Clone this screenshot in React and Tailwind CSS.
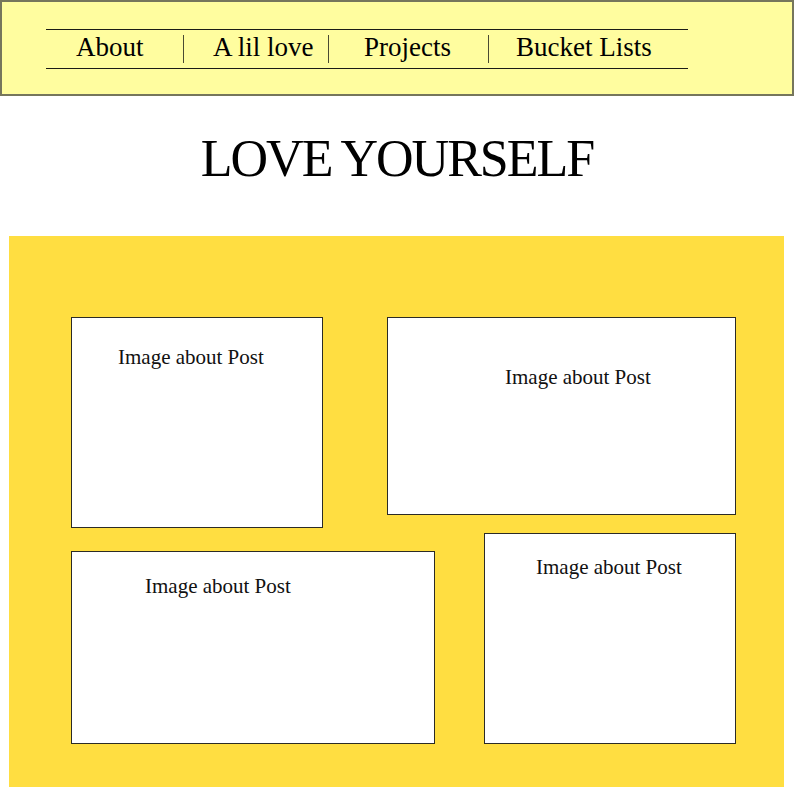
import React from 'react';

const NAV = [
  { label: 'About', cls: 'w-[137px] pl-[30px]' },
  { label: 'A lil love', cls: 'w-[144px] pl-[29px]' },
  { label: 'Projects', cls: 'w-[159px] pl-[35px]' },
  { label: 'Bucket Lists', cls: 'flex-1 pl-[27px]' },
];

const POSTS_TOP = [
  { box: 'w-[252px] h-[211px]', text: 'pt-[29px] pl-[46px]' },
  { box: 'w-[349px] h-[198px]', text: 'pt-[49px] pl-[117px]' },
];

const POSTS_BOTTOM = [
  { box: 'w-[364px] h-[193px]', text: 'pt-[24px] pl-[73px]' },
  { box: 'w-[252px] h-[211px]', text: 'pt-[23px] pl-[51px]' },
];

const PostCard = ({ box, text }) => (
  <div className={`${box} ${text} bg-white border border-[#2b2b26] shrink-0`}>
    <p className="text-[21px] leading-none text-[#111]">Image about Post</p>
  </div>
);

const App = () => {
  return (
    <div className="w-[794px] h-[787px] bg-white font-['Liberation_Serif','Times_New_Roman',serif] text-black overflow-hidden">
      {/* Header / nav */}
      <header className="h-[96px] border-2 border-[#76765c] bg-[#fffd9f] pt-[27px] pl-[44px]">
        <nav className="w-[642px] h-[40px] border-y border-[#1c1c16] flex items-center">
          {NAV.map((item, i) => (
            <React.Fragment key={item.label}>
              {i > 0 && <span className="w-px h-[28px] bg-[#4a4a32] shrink-0" />}
              <span className={`${item.cls} pb-[4px] text-[27px] leading-none whitespace-nowrap shrink-0`}>{item.label}</span>
            </React.Fragment>
          ))}
        </nav>
      </header>

      <h1 className="mt-[37px] text-center text-[52px] leading-[52px] tracking-[-2px]">LOVE YOURSELF</h1>

      {/* Posts panel */}
      <section className="mt-[51px] ml-[9px] w-[775px] h-[551px] bg-[#ffde41] pt-[81px] pl-[62px]">
        <div className="flex items-start gap-[64px]">
          {POSTS_TOP.map((p, i) => <PostCard key={i} {...p} />)}
        </div>
        <div className="flex items-end gap-[49px] mt-[5px]">
          {POSTS_BOTTOM.map((p, i) => <PostCard key={i} {...p} />)}
        </div>
      </section>
    </div>
  );
};

export default App;
